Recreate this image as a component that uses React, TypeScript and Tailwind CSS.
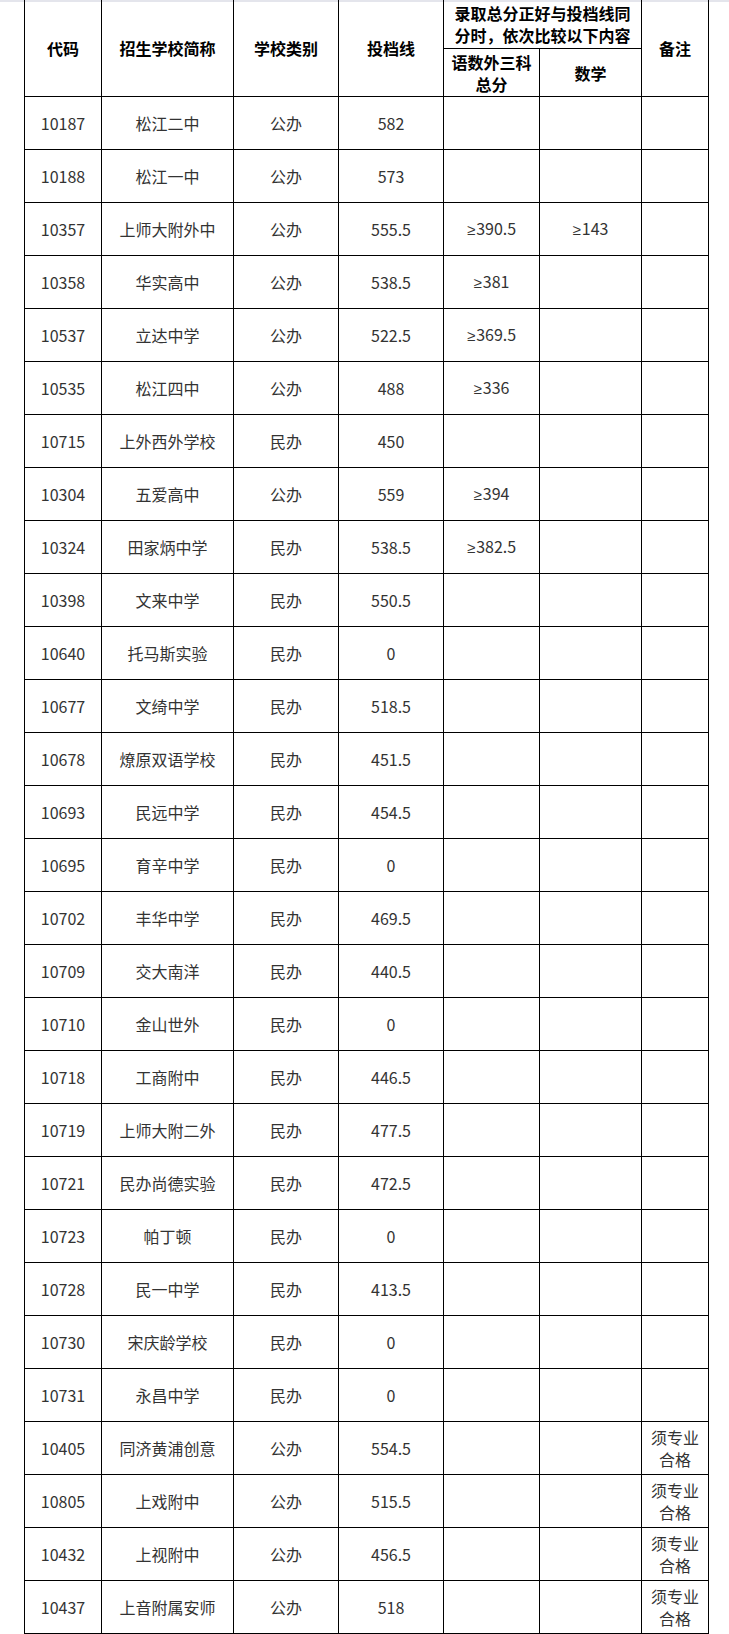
import React from 'react';

type Row = {
  code: string;
  name: string;
  type: string;
  line: string;
  total?: string;
  math?: string;
  note?: boolean;
};

const rows: Row[] = [
  { code: '10187', name: '松江二中', type: '公办', line: '582' },
  { code: '10188', name: '松江一中', type: '公办', line: '573' },
  { code: '10357', name: '上师大附外中', type: '公办', line: '555.5', total: '390.5', math: '143' },
  { code: '10358', name: '华实高中', type: '公办', line: '538.5', total: '381' },
  { code: '10537', name: '立达中学', type: '公办', line: '522.5', total: '369.5' },
  { code: '10535', name: '松江四中', type: '公办', line: '488', total: '336' },
  { code: '10715', name: '上外西外学校', type: '民办', line: '450' },
  { code: '10304', name: '五爱高中', type: '公办', line: '559', total: '394' },
  { code: '10324', name: '田家炳中学', type: '民办', line: '538.5', total: '382.5' },
  { code: '10398', name: '文来中学', type: '民办', line: '550.5' },
  { code: '10640', name: '托马斯实验', type: '民办', line: '0' },
  { code: '10677', name: '文绮中学', type: '民办', line: '518.5' },
  { code: '10678', name: '燎原双语学校', type: '民办', line: '451.5' },
  { code: '10693', name: '民远中学', type: '民办', line: '454.5' },
  { code: '10695', name: '育辛中学', type: '民办', line: '0' },
  { code: '10702', name: '丰华中学', type: '民办', line: '469.5' },
  { code: '10709', name: '交大南洋', type: '民办', line: '440.5' },
  { code: '10710', name: '金山世外', type: '民办', line: '0' },
  { code: '10718', name: '工商附中', type: '民办', line: '446.5' },
  { code: '10719', name: '上师大附二外', type: '民办', line: '477.5' },
  { code: '10721', name: '民办尚德实验', type: '民办', line: '472.5' },
  { code: '10723', name: '帕丁顿', type: '民办', line: '0' },
  { code: '10728', name: '民一中学', type: '民办', line: '413.5' },
  { code: '10730', name: '宋庆龄学校', type: '民办', line: '0' },
  { code: '10731', name: '永昌中学', type: '民办', line: '0' },
  { code: '10405', name: '同济黄浦创意', type: '公办', line: '554.5', note: true },
  { code: '10805', name: '上戏附中', type: '公办', line: '515.5', note: true },
  { code: '10432', name: '上视附中', type: '公办', line: '456.5', note: true },
  { code: '10437', name: '上音附属安师', type: '公办', line: '518', note: true },
];

const cell = 'flex items-center justify-center text-center border-r border-b border-black';
const head = `${cell} font-bold text-black leading-[22px]`;

// the ≥ sign drawn from a Latin font so it stays upright like the source
const Min = ({ v }: { v?: string }) =>
  v ? (
    <span>
      <span className="font-['Liberation_Sans',sans-serif] text-[15px] mr-[1px]">≥</span>
      {v}
    </span>
  ) : null;

export default function App() {
  return (
    <div className="w-[729px] h-[1634px] bg-[linear-gradient(#e4e5ec_0_2px,#ffffff_2px)] font-['Noto_Sans_CJK_SC',sans-serif] text-[16px]">
      <div className="ml-[24px] w-[685px] border-l border-black grid grid-cols-[77px_132px_105px_105px_96px_102px_67px] grid-rows-[49px_48px_repeat(29,53px)]">
        {/* header */}
        <div className={`${head} row-span-2`}>代码</div>
        <div className={`${head} row-span-2`}>招生学校简称</div>
        <div className={`${head} row-span-2`}>学校类别</div>
        <div className={`${head} row-span-2`}>投档线</div>
        <div className={`${head} col-span-2 whitespace-nowrap`}>
          录取总分正好与投档线同
          <br />
          分时，依次比较以下内容
        </div>
        <div className={`${head} row-span-2`}>备注</div>
        <div className={head}>
          语数外三科
          <br />
          总分
        </div>
        <div className={head}>数学</div>

        {/* data rows */}
        {rows.map((r) => (
          <React.Fragment key={r.code}>
            <div className={`${cell} text-[#333]`}>{r.code}</div>
            <div className={`${cell} text-[#333]`}>{r.name}</div>
            <div className={`${cell} text-[#333]`}>{r.type}</div>
            <div className={`${cell} text-[#333]`}>{r.line}</div>
            <div className={`${cell} text-[#333]`}>
              <Min v={r.total} />
            </div>
            <div className={`${cell} text-[#333]`}>
              <Min v={r.math} />
            </div>
            <div className={`${cell} text-[#333] leading-[22px]`}>
              {r.note ? (
                <span>
                  须专业
                  <br />
                  合格
                </span>
              ) : null}
            </div>
          </React.Fragment>
        ))}
      </div>
    </div>
  );
}
